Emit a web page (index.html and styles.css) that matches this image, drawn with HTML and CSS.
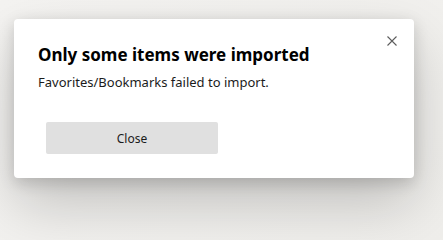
FILE: index.html
```html
<!DOCTYPE html>
<html lang="en">
<head>
<meta charset="utf-8">
<title>Import</title>
<link rel="stylesheet" href="styles.css">
</head>
<body>
<div class="dialog">
  <button class="dismiss" aria-label="Close">
    <svg width="10" height="10" viewBox="0 0 10 10"><path d="M0.5 0.5 L9.5 9.5 M9.5 0.5 L0.5 9.5" stroke="#5c5c5c" stroke-width="1.1" fill="none"/></svg>
  </button>
  <h1 class="title">Only some items were imported</h1>
  <p class="message">Favorites/Bookmarks failed to import.</p>
  <div class="actions">
    <button class="btn">Close</button>
  </div>
</div>
</body>
</html>
```
FILE: styles.css
```css
html, body {
  margin: 0;
  height: 100%;
}
body {
  background: linear-gradient(135deg, #f4f3f1 0%, #efeeeb 100%);
  font-family: "Noto Sans", "Open Sans", sans-serif;
  padding: 19px 0 0 14px;
  box-sizing: border-box;
  overflow: hidden;
}
.dialog {
  position: relative;
  width: 400px;
  height: 159px;
  box-sizing: border-box;
  background: #fff;
  border-radius: 4px;
  box-shadow: 0 25.6px 57.6px rgba(0,0,0,0.20), 0 4.8px 14.4px rgba(0,0,0,0.16);
  padding: 24px 24px 0 24px;
}
.dismiss {
  position: absolute;
  top: 17px;
  right: 17px;
  width: 10px;
  height: 10px;
  padding: 0;
  border: 0;
  background: none;
  display: flex;
}
.title {
  margin: 0;
  font-size: 17px;
  font-weight: 700;
  line-height: 24px;
  color: #000;
}
.message {
  margin: 6px 0 0 0;
  font-size: 13px;
  line-height: 18px;
  color: #1b1b1b;
}
.actions {
  margin-top: 31px;
  padding-left: 8px;
  display: flex;
}
.btn {
  width: 172px;
  height: 32px;
  border: 0;
  border-radius: 2px;
  background: #e0e0e0;
  font-family: inherit;
  font-size: 12px;
  color: #1b1b1b;
}
```
